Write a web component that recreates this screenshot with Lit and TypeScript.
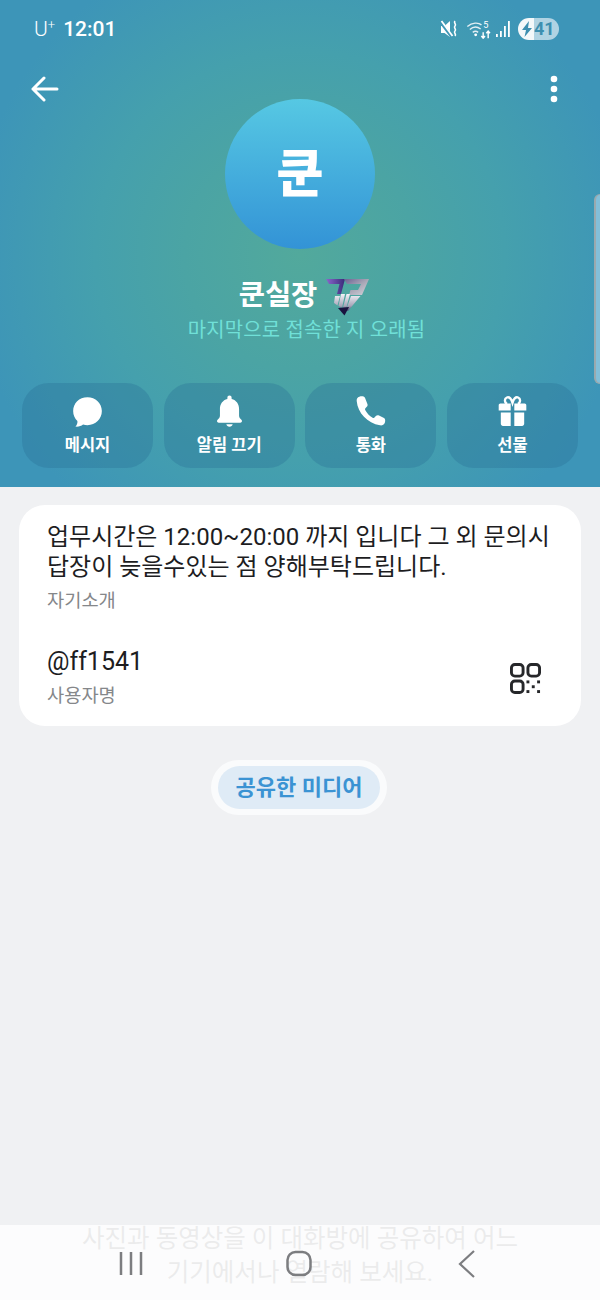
import { LitElement, html, css, svg } from "lit";
import { customElement } from "lit/decorators.js";

const actions = [
  { label: "메시지", icon: svg`<path d="M15 3C7 3 1.500 8.700 1.500 16c0 3.900 1.500 7 4 9.300.300 2.200-.700 4.200-2 5.400 3 .400 5.500-.500 7.300-2 1.300.400 2.700.600 4.200.600 7.500 0 13.500-5.800 13.500-13.300S22.500 3 15 3z"/>` },
  { label: "알림 끄기", icon: svg`<path d="M15 1.500c-1.200 0-2 .800-2 2v1.200C8.600 5.800 6 9.500 6 14v6.500c0 1.500-.900 2.600-2.200 3.800-.900.900-.800 2.700 1 2.700h20.400c1.800 0 1.900-1.800 1-2.700-1.300-1.200-2.200-2.300-2.200-3.800V14c0-4.500-2.600-8.200-7-9.300V3.500c0-1.200-.800-2-2-2z"/><path d="M12 28.500h6c-.300 1.500-1.500 2.300-3 2.300s-2.700-.800-3-2.300z"/>` },
  { label: "통화", icon: svg`<path d="M4.500 2.500C2.800 3 1.800 4.500 2 6.500 3 18 12 27 24 29.500c2 .300 3.500-.500 4.500-2.500.600-1.500.500-3.500-.800-4.300l-4.700-2.500c-1.200-.500-2.300-.200-3.200.800l-1.300 1.300c-.500.400-1 .400-1.500.100-3-1.800-5.300-4.300-7-7.400-.300-.500-.200-1 .200-1.500l1.300-1.400c.800-.800 1-1.800.500-2.900L9.800 3.500C8.800 2 6.500 1.800 4.500 2.500z"/>` },
  { label: "선물", icon: svg`<path d="M10 9.200C7.500 8.500 7 4.300 9.700 3.300c2.500-.900 4.300 1.500 5.300 5 1-3.500 2.800-5.900 5.300-5 2.700 1 2.200 5.200-.3 5.900" fill="none" stroke="#fff" stroke-width="2.200"/><path d="M3.500 9h9.800v6.500H2V10.500C2 9.700 2.700 9 3.500 9zM16.700 9h9.800c.800 0 1.500.700 1.500 1.500v5H16.700zM4 17.500h9.300V30H6c-1.100 0-2-.900-2-2zM16.700 17.500H26V28c0 1.100-.900 2-2 2h-7.300z"/>` },
];

@customElement("app-root")
export class AppRoot extends LitElement {
  static styles = css`
    :host {
      display: block;
      width: 600px;
      height: 1300px;
      overflow: hidden;
      position: relative;
      background: #f0f1f3;
      font-family: Roboto, "Noto Sans CJK KR", sans-serif;
    }
    .header {
      height: 487px;
      box-sizing: border-box;
      position: relative;
      display: flex;
      flex-direction: column;
      background: radial-gradient(circle 330px at 300px 255px, #52a99c 0%, #4ba4a4 35%, #45a0ad 62%, #3d95b8 100%);
      color: #fff;
    }
    .status {
      height: 58px;
      display: flex;
      align-items: center;
      padding: 0 41px 0 34px;
      box-sizing: border-box;
    }
    .carrier { font-size: 21px; font-weight: 300; margin-right: 8px; }
    .carrier sup { font-size: 13px; line-height: 0; vertical-align: 7px; }
    .time { font-size: 21px; font-weight: 500; flex: 1; }
    .status-icons { display: flex; align-items: center; }
    .battery {
      width: 41px; height: 22px; border-radius: 11px; overflow: hidden;
      display: flex; margin-left: 7px; font-size: 18px; font-weight: 700;
      background: linear-gradient(90deg, #f4f8fa 0 40%, #b0d3e3 40% 100%);
      color: #3d8fb0; align-items: center; box-sizing: border-box; padding-left: 3px;
    }
    .battery span { margin-left: 1px; line-height: 22px; }
    .toolbar {
      height: 42px; margin-top: 10px; padding: 0 42px 0 31px;
      display: flex; justify-content: space-between; align-items: center;
    }
    .avatar {
      width: 150px; height: 150px; border-radius: 50%;
      margin: -11px auto 0;
      background: linear-gradient(180deg, #56c8e3 0%, #3393d6 100%);
      display: flex; align-items: center; justify-content: center;
      font-size: 51px; font-weight: 900; line-height: 1;
    }
    .name {
      margin-top: 26px; height: 42px; display: flex; align-items: center; justify-content: center;
      gap: 9px; padding-left: 8px; font-size: 28.500px; font-weight: 700; line-height: 42px;
    }
    .name svg { margin-top: 1px; }
    .seen {
      text-align: center; color: #70e0d8; font-size: 19.900px; line-height: 24px;
      letter-spacing: .2px; padding-left: 13px; margin-top: 2px;
    }
    .actions {
      display: grid; grid-template-columns: repeat(4, 1fr); gap: 10.670px;
      padding: 0 22px; margin-top: 40px;
    }
    .action {
      height: 85px; border-radius: 27px; background: rgba(40, 110, 150, .34);
      display: flex; flex-direction: column; align-items: center; box-sizing: border-box; padding-top: 11px;
    }
    .action svg { width: 33px; height: 34px; fill: #fff; display: block; }
    .action div { font-size: 16.500px; font-weight: 700; line-height: 22px; margin-top: 7px; }
    .scroll {
      position: absolute; right: 0; top: 194px; width: 6px; height: 190px;
      background: #83bfd9; border-left: 2px solid #9aa9ae; box-sizing: border-box; border-radius: 6px 0 0 6px;
      border-top: 1px solid #9aa9ae; border-bottom: 1px solid #9aa9ae;
    }
    .card {
      margin: 18px 19px 0; height: 221px; background: #fff; border-radius: 26px; box-sizing: border-box;
      padding: 17px 28px 0; position: relative;
    }
    .bio { font-size: 24px; line-height: 30px; color: #1d1d1f; white-space: nowrap; }
    .label { font-size: 18.700px; line-height: 24px; color: #85878a; }
    .bio + .label { margin-top: 7px; }
    .user-row { display: flex; align-items: flex-end; justify-content: space-between; margin-top: 33px; }
    .user { font-size: 25px; line-height: 32px; color: #1d1d1f; }
    .user + .label { margin-top: 6px; }
    .qr { width: 31px; height: 31px; margin: 0 12px 14px 0; display: block; }
    .pill-wrap { display: flex; justify-content: center; margin-top: 34px; padding-right: 2px; }
    .pill-outer { padding: 6px 7px; background: #fafbfc; border-radius: 28px; }
    .pill {
      width: 162px; height: 43px; border-radius: 22px; background: #dfebf6; color: #3b93d3;
      font-size: 22px; font-weight: 700; line-height: 43px; text-align: center; white-space: nowrap;
    }
    .hint {
      position: absolute; left: 0; right: 0; top: 1222px; text-align: center;
      font-size: 24.500px; line-height: 34px; color: #9c9da0;
    }
    .nav {
      position: absolute; left: 0; right: 0; bottom: 0; height: 75px;
      background: rgba(255, 255, 255, .8);
    }
    .nav svg { position: absolute; left: 0; top: 0; width: 600px; height: 75px; }
  `;

  render() {
    return html`
      <div class="header">
        <div class="status">
          <span class="carrier">U<sup>+</sup></span>
          <span class="time">12:01</span>
          <div class="status-icons">
            <svg width="18" height="22" viewBox="0 0 18 22">
              <path fill="#fff" d="M1 8h3.500L10 3 V19L4.500 15H1z"/>
              <path d="M0 3l12 16" stroke="#3f97b6" stroke-width="3.200"/>
              <path d="M1.500 3l11 15" stroke="#fff" stroke-width="1.800"/>
              <path d="M15 3c-2 2 2 3 0 5s2 3 0 5 2 3 0 5" fill="none" stroke="#fff" stroke-width="1.600"/>
            </svg>
            <svg width="26" height="20" viewBox="0 0 30 24" style="margin-left:8px">
              <g fill="none" stroke="#e3eff4" stroke-width="1.700">
                <path d="M1 9c6-5 13-5 17-2"/><path d="M4 12.500c4-3.500 9-3.500 13-.500"/><path d="M7.500 16c2-1.500 4.500-1.500 6.500 0"/>
              </g>
              <circle cx="11" cy="19" r="1.700" fill="#fff"/>
              <path d="M20 16v7M17.800 20.500l2.200 2.500 2.200-2.500M26 23v-8M23.800 17l2.200-2.500 2.200 2.500" fill="none" stroke="#fff" stroke-width="1.700"/>
              <text x="20" y="11" font-size="11" fill="#fff" font-family="Roboto">5</text>
            </svg>
            <svg width="16" height="20" viewBox="0 0 16 20" style="margin-left:3px">
              <rect x="1" y="15" width="1.800" height="3" fill="#fff"/><rect x="5" y="12" width="1.800" height="6" fill="#fff"/><rect x="9" y="7" width="1.800" height="11" fill="#fff"/><rect x="13" y="2" width="1.800" height="16" fill="#fff"/>
            </svg>
            <div class="battery">
              <svg width="12" height="18" viewBox="0 0 12 18"><path fill="#3d8fb0" d="M8 1L1 10h4l-1.500 7L11 8H7z"/></svg>
              <span>41</span>
            </div>
          </div>
        </div>
        <div class="toolbar">
          <svg width="28" height="26" viewBox="0 0 28 26" fill="none" stroke="#fff" stroke-width="3" stroke-linecap="round" stroke-linejoin="round">
            <path d="M2 13h24M13 2L2 13l11 11"/>
          </svg>
          <svg width="8" height="28" viewBox="0 0 8 28" fill="#fff"><circle cx="4" cy="4" r="3.300"/><circle cx="4" cy="14" r="3.300"/><circle cx="4" cy="24" r="3.300"/></svg>
        </div>
        <div class="avatar">쿤</div>
        <div class="name">
          <span>쿤실장</span>
          <svg width="43" height="38" viewBox="0 0 43 38">
            <defs>
              <linearGradient id="pu" x1="0" y1="0" x2="1" y2="0">
                <stop offset="0" stop-color="#8a68cc"/><stop offset="1" stop-color="#3a2a7a"/>
              </linearGradient>
              <linearGradient id="si" x1="0" y1="0" x2="1" y2="1">
                <stop offset="0" stop-color="#6a6094"/><stop offset=".5" stop-color="#a9a7b6"/><stop offset="1" stop-color="#d4d4dc"/>
              </linearGradient>
              <linearGradient id="st" x1="0" y1="0" x2="0" y2="1">
                <stop offset="0" stop-color="#f4f4f8"/><stop offset=".7" stop-color="#a6a4b8"/><stop offset="1" stop-color="#4a4570"/>
              </linearGradient>
            </defs>
            <path fill="url(#pu)" d="M0 1h19l-4 15h-4l2.500-10H3z"/>
            <path fill="url(#si)" d="M18 1h25l-7 16H23l1.500-5h7.500l3-6H21z"/>
            <path fill="url(#st)" d="M9 18h5l-2.500 9.500-3.500-2.500zM15 16h4l-3 14-3.500-2zM20.500 16H24l-4 15-3-1.500zM25 18h9.500L22 33l-2-1z"/>
            <path fill="#19123f" d="M12 30l11-1-4.500 8.500z"/>
          </svg>
        </div>
        <div class="seen">마지막으로 접속한 지 오래됨</div>
        <div class="actions">
          ${actions.map(
            (a) => html`<div class="action">
              <svg viewBox="0 0 30 32">${a.icon}</svg>
              <div>${a.label}</div>
            </div>`
          )}
        </div>
        <div class="scroll"></div>
      </div>
      <div class="card">
        <div class="bio">업무시간은 12:00~20:00 까지 입니다 그 외 문의시<br />답장이 늦을수있는 점 양해부탁드립니다.</div>
        <div class="label">자기소개</div>
        <div class="user-row">
          <div>
            <div class="user">@ff1541</div>
            <div class="label">사용자명</div>
          </div>
          <svg class="qr" viewBox="0 0 32 32" fill="none" stroke="#26272a" stroke-width="3">
            <rect x="1.500" y="1.500" width="12" height="12" rx="3.500"/>
            <rect x="18.500" y="1.500" width="12" height="12" rx="3.500"/>
            <rect x="1.500" y="18.500" width="12" height="12" rx="3.500"/>
            <g fill="#26272a" stroke="none">
              <rect x="17" y="18" width="3" height="3"/><rect x="28" y="18" width="3" height="3"/><rect x="22.500" y="23" width="3" height="3"/><rect x="17" y="28" width="3" height="3"/><rect x="28" y="28" width="3" height="3"/>
            </g>
          </svg>
        </div>
      </div>
      <div class="pill-wrap"><div class="pill-outer"><div class="pill">공유한 미디어</div></div></div>
      <div class="hint">사진과 동영상을 이 대화방에 공유하여 어느<br />기기에서나 열람해 보세요.</div>
      <div class="nav">
        <svg viewBox="0 0 600 75" fill="none" stroke="#7c7d80" stroke-width="2.500">
          <path d="M121 27v23M131 27v23M141 27v23"/>
          <rect x="287.500" y="27" width="23" height="23" rx="8"/>
          <path d="M474 26L460 39l14 13" stroke-width="2.200"/>
        </svg>
      </div>
    `;
  }
}
